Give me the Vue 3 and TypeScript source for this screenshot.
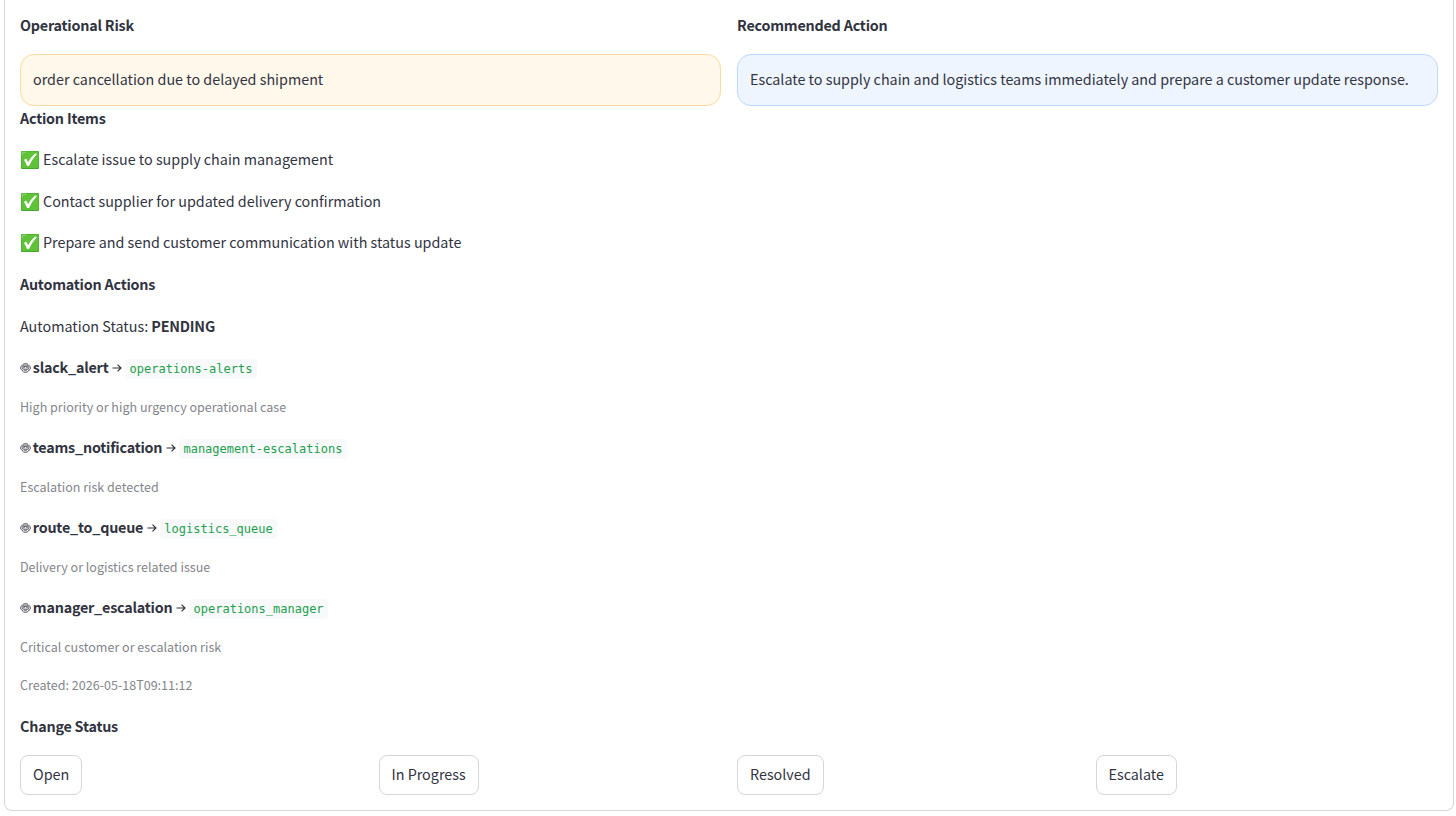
<script setup lang="ts">
interface Automation {
  name: string
  target: string
  reason: string
}

const actionItems: string[] = [
  'Escalate issue to supply chain management',
  'Contact supplier for updated delivery confirmation',
  'Prepare and send customer communication with status update',
]

const automations: Automation[] = [
  { name: 'slack_alert', target: 'operations-alerts', reason: 'High priority or high urgency operational case' },
  { name: 'teams_notification', target: 'management-escalations', reason: 'Escalation risk detected' },
  { name: 'route_to_queue', target: 'logistics_queue', reason: 'Delivery or logistics related issue' },
  { name: 'manager_escalation', target: 'operations_manager', reason: 'Critical customer or escalation risk' },
]

const statuses: string[] = ['Open', 'In Progress', 'Resolved', 'Escalate']
</script>

<template>
  <main class="case">
    <section class="pair">
      <div class="col">
        <p class="line heading"><strong>Operational Risk</strong></p>
        <div class="note risk">order cancellation due to delayed shipment</div>
      </div>
      <div class="col">
        <p class="line heading"><strong>Recommended Action</strong></p>
        <div class="note advice">Escalate to supply chain and logistics teams immediately and prepare a customer update response.</div>
      </div>
    </section>

    <section class="stack">
      <p class="line heading"><strong>Action Items</strong></p>
      <p v-for="item in actionItems" :key="item" class="line">
        <svg class="check" viewBox="0 0 18 18" aria-hidden="true">
          <rect width="18" height="18" rx="1" fill="#43a92c" />
          <rect x="0.5" y="0.5" width="17" height="16.5" rx="1" fill="#5fc238" />
          <path d="M1.2 4.2V2.2Q1.2 1.2 2.2 1.2H5" fill="none" stroke="#a5e58b" stroke-width="0.8" />
          <path d="M3 8.9L5 7.6Q6.3 9.3 7.1 11.2Q9.8 6 14 2.4L15.9 3Q11 8.4 8 15L6.1 15.1Q5 11.8 3 8.9Z" fill="#fff" />
        </svg>
        <span>{{ item }}</span>
      </p>
      <p class="line heading"><strong>Automation Actions</strong></p>
      <p class="line">Automation Status:&nbsp;<strong>PENDING</strong></p>

      <template v-for="entry in automations" :key="entry.name">
        <p class="line">
          <svg class="robot" viewBox="0 0 11 10" aria-hidden="true">
            <path d="M2 2.9C2.7 1.3 3.9 .6 5.5 .6S8.3 1.3 9 2.9C10.2 3.1 10.6 3.9 10.6 4.9S10 6.7 9 6.9C8.4 8.6 7.2 9.4 5.5 9.4S2.6 8.6 2 6.9C1 6.7 .4 5.9 .4 4.9S.8 3.1 2 2.9Z" fill="none" stroke="#31333f" stroke-width="0.8" />
            <rect x="2.1" y="3.4" width="6.8" height="2.9" rx="1.3" fill="none" stroke="#31333f" stroke-width="0.8" />
            <path d="M3 2.1H8M4 7.8H7" stroke="#31333f" stroke-width="0.7" />
            <circle cx="4" cy="4.8" r=".7" fill="#31333f" />
            <circle cx="7" cy="4.8" r=".7" fill="#31333f" />
          </svg>
          <strong>{{ entry.name }}</strong>
          <svg class="arrow" viewBox="0 0 10 10" aria-hidden="true">
            <path d="M.5 5H8.8M5.5 1.6L9 5L5.5 8.4" fill="none" stroke="#31333f" stroke-width="1.2" />
          </svg>
          <code>{{ entry.target }}</code>
        </p>
        <p class="caption">{{ entry.reason }}</p>
      </template>

      <p class="caption">Created: 2026-05-18T09:11:12</p>
      <p class="line heading"><strong>Change Status</strong></p>
      <div class="actions">
        <div v-for="status in statuses" :key="status">
          <button type="button">{{ status }}</button>
        </div>
      </div>
    </section>
  </main>
</template>

<style>
html,
body {
  background: #fff;
  overflow: hidden;
}
</style>

<style scoped>
.case {
  box-sizing: border-box;
  width: 1450px;
  height: 811px;
  margin-left: 4px;
  padding: 12.4px 15px 15px;
  border: 1px solid #d6d6d9;
  border-top: 0;
  border-radius: 0 0 8px 8px;
  color: #31333f;
  font-family: "Noto Sans CJK SC", "Noto Sans", sans-serif;
  font-size: 14.33px;
  line-height: 25.6px;
}
.pair {
  display: grid;
  grid-template-columns: 1fr 1fr;
  gap: 16px;
}
.col,
.stack {
  display: flex;
  flex-direction: column;
  gap: 16px;
}
.line,
.caption {
  box-sizing: border-box;
  display: flex;
  align-items: center;
  margin: 0;
  height: 25.6px;
  padding-bottom: 2px;
  white-space: nowrap;
}
.heading {
  padding-bottom: 1px;
}
.caption {
  height: 22.4px;
  color: #84858c;
  font-size: 12.54px;
  line-height: 22.4px;
}
strong {
  font-weight: 700;
  letter-spacing: -0.21px;
}
.note {
  box-sizing: border-box;
  height: 51.6px;
  padding: 11.2px 12px 12.8px;
  border: 1px solid;
  border-radius: 14px;
  white-space: nowrap;
}
.risk {
  border-color: #fbdc9c;
  background: #fff8eb;
}
.advice {
  border-color: #bfd7fe;
  background: #eef5ff;
}
.check {
  flex: none;
  width: 18px;
  height: 18px;
  margin: 2px 4px 0 1px;
}
.robot {
  flex: none;
  width: 11px;
  height: 10px;
  margin: 1.6px 2.3px 0 -0.5px;
}
.arrow {
  flex: none;
  width: 10px;
  height: 10px;
  margin: 3px 3px 0 3.5px;
}
code {
  margin-top: 4.4px;
  padding: 0 4.6px;
  border-radius: 4px;
  background: #f8f9fb;
  color: #21a04b;
  font-family: "DejaVu Sans Mono", monospace;
  font-size: 12px;
  line-height: 20px;
}
.actions {
  display: grid;
  grid-template-columns: repeat(4, 1fr);
  gap: 16px;
}
button {
  box-sizing: border-box;
  height: 40px;
  padding: 0 12px 2px;
  border: 1px solid #d6d6d9;
  border-radius: 8px;
  background: #fff;
  color: inherit;
  font: inherit;
  display: block;
}
</style>
